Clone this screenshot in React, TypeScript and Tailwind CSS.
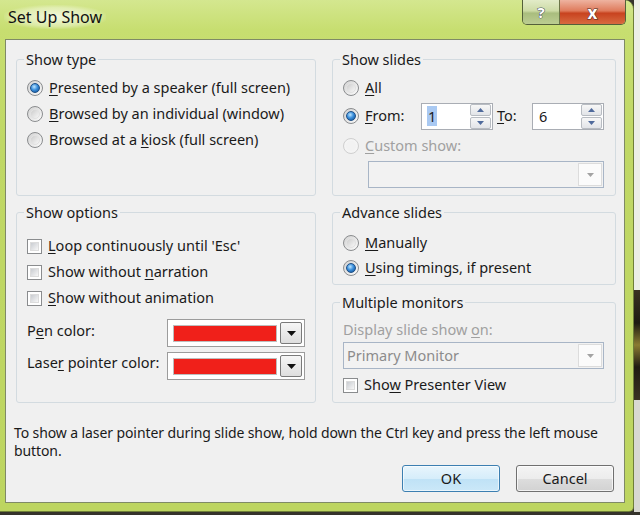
import React from 'react';

type Kids = { children?: React.ReactNode };

function Key({ children }: Kids) {
  return <u className="decoration-1 underline-offset-[2px]">{children}</u>;
}

function Radio({ checked = false, disabled = false }: { checked?: boolean; disabled?: boolean }) {
  return (
    <span
      className={`w-4 h-4 rounded-full border flex items-center justify-center shrink-0 ${
        disabled ? 'border-[#cfcfcf] bg-[#f4f4f4]' : 'border-[#8a8c8e] bg-[linear-gradient(135deg,#d2d2d2,#fbfbfb)]'
      }`}
    >
      {checked ? (
        <span className="w-[10px] h-[10px] rounded-full border border-[#1d4f86] bg-[radial-gradient(circle_at_40%_35%,#bde6ff_0%,#3b8fdc_45%,#0e4a8c_100%)]" />
      ) : (
        <span
          className={`w-[10px] h-[10px] rounded-full ${
            disabled ? 'bg-[#f2f2f2]' : 'border border-[#e2e2e2] bg-[linear-gradient(135deg,#cdcdcd,#f7f7f7)]'
          }`}
        />
      )}
    </span>
  );
}

function Check() {
  return (
    <span className="w-[15px] h-[15px] border border-[#8a8c8e] bg-white p-[2px] shrink-0 flex">
      <span className="flex-1 border border-[#dcdcdc] bg-[linear-gradient(135deg,#c9ccd1,#f7f7f7)]" />
    </span>
  );
}

function Arrow({ up = false, color }: { up?: boolean; color: string }) {
  return (
    <svg width="7" height="4" viewBox="0 0 7 4">
      <path d={up ? 'M0 4 L3.5 0 L7 4 Z' : 'M0 0 L7 0 L3.5 4 Z'} fill={color} />
    </svg>
  );
}

function Spin({ value, selected = false }: { value: string; selected?: boolean }) {
  return (
    <div className="w-[72px] h-[27px] border border-[#a9adb4] bg-white flex items-center">
      <span className="flex-1 pl-[5px] leading-[17px]">
        <span className={selected ? 'bg-[#a9c9f2] px-[1px]' : 'px-[1px]'}>{value}</span>
      </span>
      <div className="w-[21px] h-[25px] mr-[1px] flex flex-col gap-px">
        <span className="flex-1 rounded-[2px] border border-[#b8bcc2] bg-[linear-gradient(to_bottom,#f7f7f7,#e2e4e8)] flex items-center justify-center">
          <Arrow up color="#4f6a9c" />
        </span>
        <span className="flex-1 rounded-[2px] border border-[#b8bcc2] bg-[linear-gradient(to_bottom,#f7f7f7,#e2e4e8)] flex items-center justify-center">
          <Arrow color="#4f6a9c" />
        </span>
      </div>
    </div>
  );
}

function ColorPick() {
  return (
    <div className="w-[138px] h-[28px] border border-[#9c9c9c] bg-white flex items-center pl-[5px]">
      <span className="w-[104px] h-[17px] border border-[#bdbdbd] bg-[#f0201a]" />
      <span className="ml-[3px] w-[22px] h-[22px] rounded-[2px] border border-[#7a7a7a] bg-[linear-gradient(to_bottom,#f6f6f6,#dedede)] flex items-center justify-center">
        <svg width="9" height="5" viewBox="0 0 9 5">
          <path d="M0 0 L9 0 L4.5 5 Z" fill="#111" />
        </svg>
      </span>
    </div>
  );
}

function Combo({ className, text }: { className: string; text?: string }) {
  return (
    <div className={`h-[27px] border border-[#a8b5c6] bg-[#f2f2f2] flex items-stretch ${className}`}>
      <span className="flex-1 pl-[3px] flex items-center text-[#8c8c8c]">{text}</span>
      <span className="w-[24px] my-[1px] mr-[1px] border border-[#dcdcdc] bg-[#fbfbfb] flex items-center justify-center">
        <Arrow color="#a3a3a3" />
      </span>
    </div>
  );
}

function Group({ title, className, children }: { title: string; className: string } & Kids) {
  return (
    <fieldset className={`border border-[#d3dbe0] rounded-[3px] min-w-0 ${className}`}>
      <legend className="ml-[7px] px-[2px] leading-[16px]">{title}</legend>
      {children}
    </fieldset>
  );
}

function Row({ className, children }: { className: string } & Kids) {
  return <div className={`flex items-center gap-[6px] ${className}`}>{children}</div>;
}

function TitleBar() {
  return (
    <div className="h-[39px] flex items-start">
      <div className="pl-[4px] pt-[7px]">
        <span className="px-[4px] py-[1px] text-[16px] leading-[20px] text-[#111] bg-[radial-gradient(ellipse_at_center,rgba(255,255,255,0.75)_0%,rgba(255,255,255,0.35)_55%,rgba(255,255,255,0)_75%)]">
          Set Up Show
        </span>
      </div>
      <div className="flex-1" />
      <div className="mr-[7px] flex h-[25px] rounded-b-[5px] border border-t-0 border-[#54603a] overflow-hidden">
        <div className="w-[37px] flex items-center justify-center border-r border-[#6b7548] bg-[linear-gradient(to_bottom,#e2ebc8_0%,#cddba6_45%,#a9bd7e_55%,#bccd92_100%)]">
          <span className="font-bold text-[15px] leading-none text-white [-webkit-text-stroke:1px_#3e4a5c] [paint-order:stroke_fill]">?</span>
        </div>
        <div className="w-[65px] flex items-center justify-center bg-[linear-gradient(to_bottom,#eeb3a0_0%,#df7b5c_45%,#c8431f_55%,#d86a40_100%)]">
          <span className="font-bold text-[17px] leading-none text-white [-webkit-text-stroke:1px_#4a2a22] [paint-order:stroke_fill]">x</span>
        </div>
      </div>
    </div>
  );
}

export default function App() {
  return (
    <div className="w-[640px] h-[515px] overflow-hidden bg-[#35332b] font-['Noto_Sans','Open_Sans',sans-serif] text-[14.5px] text-[#1a1a1a]">
      <div className="flex h-[512px]">
        <div className="w-[634px] h-full flex flex-col rounded-tr-[9px] rounded-br-[5px] border-r border-b border-[#6f7f38] bg-[linear-gradient(to_bottom,#d4e78f_0px,#c7de70_30px,#c0d865_140px,#bdd560_100%)]">
          <TitleBar />
          <div className="ml-[5px] w-[620px] h-[464px] border border-[#7f8a66] bg-[#f0f0f0]">
            <div className="pt-[11px] pl-[10px] grid grid-cols-[300px_284px] gap-x-4 gap-y-2">
              <Group title="Show type" className="h-[145px]">
                <div className="pt-2 pl-[10px]">
                  <Row className="h-[26px]">
                    <Radio checked />
                    <span><Key>P</Key>resented by a speaker (full screen)</span>
                  </Row>
                  <Row className="h-[26px]">
                    <Radio />
                    <span><Key>B</Key>rowsed by an individual (window)</span>
                  </Row>
                  <Row className="h-[26px]">
                    <Radio />
                    <span>Browsed at a <Key>k</Key>iosk (full screen)</span>
                  </Row>
                </div>
              </Group>

              <Group title="Show slides" className="h-[145px]">
                <div className="pt-2 pl-[10px]">
                  <Row className="h-[26px]">
                    <Radio />
                    <span><Key>A</Key>ll</span>
                  </Row>
                  <Row className="h-[30px]">
                    <Radio checked />
                    <span className="w-[56px]"><Key>F</Key>rom:</span>
                    <div className="-ml-[6px] flex items-center">
                      <Spin value="1" selected />
                      <span className="ml-[4px] w-[35px]"><Key>T</Key>o:</span>
                      <Spin value="6" />
                    </div>
                  </Row>
                  <Row className="h-[30px] text-[#a0a0a0]">
                    <Radio disabled />
                    <span><Key>C</Key>ustom show:</span>
                  </Row>
                  <Combo className="ml-[25px] w-[236px]" />
                </div>
              </Group>

              <Group title="Show options" className="h-[199px]">
                <div className="pt-[13px] pl-[10px]">
                  <Row className="h-[26px]">
                    <Check />
                    <span><Key>L</Key>oop continuously until 'Esc'</span>
                  </Row>
                  <Row className="h-[26px]">
                    <Check />
                    <span>Show without <Key>n</Key>arration</span>
                  </Row>
                  <Row className="h-[26px]">
                    <Check />
                    <span><Key>S</Key>how without animation</span>
                  </Row>
                  <div className="mt-[8px] h-[28px] flex items-center">
                    <span className="w-[140px] -mt-[4px]">P<Key>e</Key>n color:</span>
                    <ColorPick />
                  </div>
                  <div className="mt-[5px] h-[28px] flex items-center">
                    <span className="w-[140px] -mt-[6px]">Lase<Key>r</Key> pointer color:</span>
                    <ColorPick />
                  </div>
                </div>
              </Group>

              <div className="flex flex-col gap-[9px]">
                <Group title="Advance slides" className="h-[81px]">
                  <div className="pt-[10px] pl-[10px]">
                    <Row className="h-[25px]">
                      <Radio />
                      <span><Key>M</Key>anually</span>
                    </Row>
                    <Row className="h-[25px]">
                      <Radio checked />
                      <span><Key>U</Key>sing timings, if present</span>
                    </Row>
                  </div>
                </Group>
                <Group title="Multiple monitors" className="h-[109px]">
                  <div className="pt-[10px] pl-[10px]">
                    <div className="h-[20px] flex items-center text-[#a0a0a0]">
                      <span>Display slide show <Key>o</Key>n:</span>
                    </div>
                    <Combo className="mt-[2px] w-[261px] bg-[#ececec]" text="Primary Monitor" />
                    <Row className="mt-[4px] h-[24px]">
                      <Check />
                      <span>Sho<Key>w</Key> Presenter View</span>
                    </Row>
                  </div>
                </Group>
              </div>
            </div>

            <p className="mt-[21px] pl-[8px] text-[14px] leading-[18px] whitespace-nowrap tracking-[-0.1px]">
              To show a laser pointer during slide show, hold down the Ctrl key and press the left mouse
              <br />
              button.
            </p>

            <div className="mt-[5px] pr-[10px] flex justify-end gap-4">
              <button className="w-[98px] h-[27px] rounded-[3px] border border-[#3c7fb1] bg-[linear-gradient(to_bottom,#e8f5fc_0%,#d6edfa_50%,#bfe2f6_51%,#cbe8f8_100%)] shadow-[inset_0_0_0_1px_rgba(255,255,255,0.6)]">
                OK
              </button>
              <button className="w-[98px] h-[27px] rounded-[3px] border border-[#707070] bg-[linear-gradient(to_bottom,#f4f4f4_0%,#ececec_50%,#dddddd_51%,#d2d2d2_100%)] shadow-[inset_0_0_0_1px_rgba(255,255,255,0.7)]">
                Cancel
              </button>
            </div>
          </div>
        </div>
        <div className="w-[6px] h-full flex flex-col">
          <div className="h-[290px] bg-[#eceee6]" />
          <div className="h-[110px] bg-[linear-gradient(to_bottom,#3a3222,#1d1a12_30%,#8a7b32_50%,#201c12_70%,#3a3222)]" />
          <div className="flex-1 bg-[#d8d8d2]" />
        </div>
      </div>
    </div>
  );
}
